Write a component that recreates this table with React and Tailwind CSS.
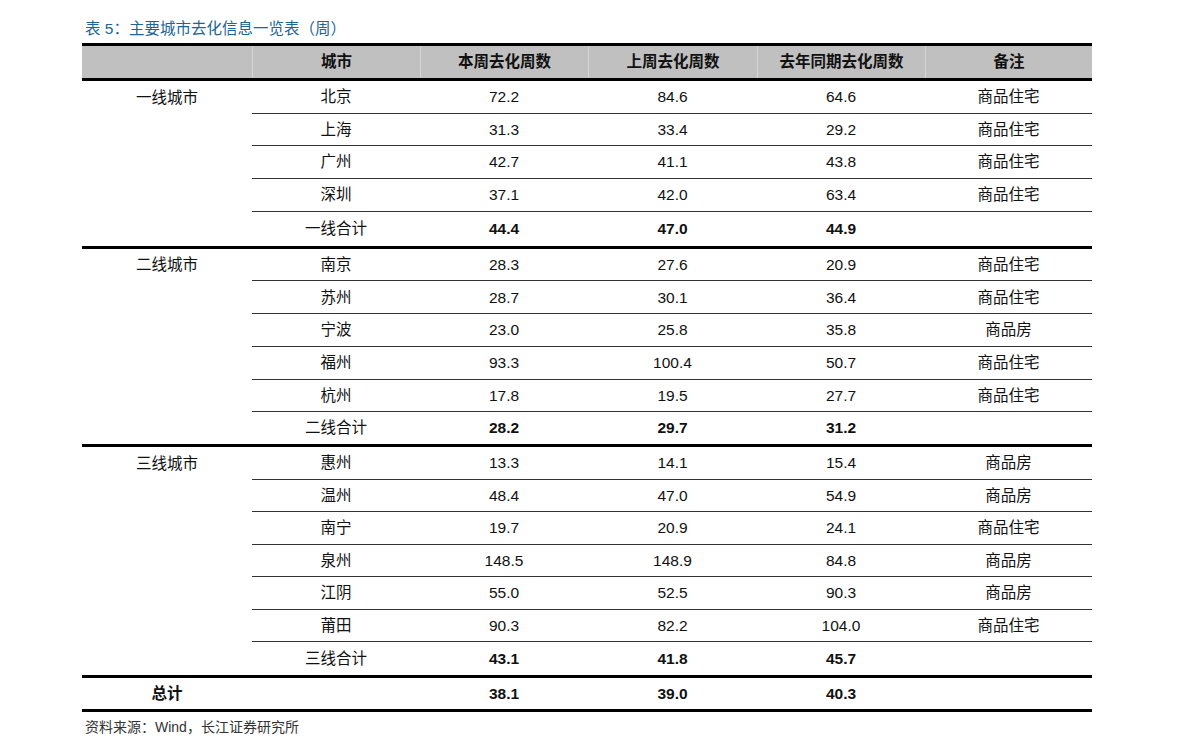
import React from "react";

const groups = [
  {
    label: "一线城市",
    rowH: "h-[32.7px]",
    totalH: "h-[34px]",
    rows: [
      ["北京", "72.2", "84.6", "64.6", "商品住宅"],
      ["上海", "31.3", "33.4", "29.2", "商品住宅"],
      ["广州", "42.7", "41.1", "43.8", "商品住宅"],
      ["深圳", "37.1", "42.0", "63.4", "商品住宅"],
    ],
    total: ["一线合计", "44.4", "47.0", "44.9", ""],
  },
  {
    label: "二线城市",
    rowH: "h-[32.74px]",
    totalH: "h-[31.6px]",
    rows: [
      ["南京", "28.3", "27.6", "20.9", "商品住宅"],
      ["苏州", "28.7", "30.1", "36.4", "商品住宅"],
      ["宁波", "23.0", "25.8", "35.8", "商品房"],
      ["福州", "93.3", "100.4", "50.7", "商品住宅"],
      ["杭州", "17.8", "19.5", "27.7", "商品住宅"],
    ],
    total: ["二线合计", "28.2", "29.7", "31.2", ""],
  },
  {
    label: "三线城市",
    rowH: "h-[32.57px]",
    totalH: "h-[32.57px]",
    rows: [
      ["惠州", "13.3", "14.1", "15.4", "商品房"],
      ["温州", "48.4", "47.0", "54.9", "商品房"],
      ["南宁", "19.7", "20.9", "24.1", "商品住宅"],
      ["泉州", "148.5", "148.9", "84.8", "商品房"],
      ["江阴", "55.0", "52.5", "90.3", "商品房"],
      ["莆田", "90.3", "82.2", "104.0", "商品住宅"],
    ],
    total: ["三线合计", "43.1", "41.8", "45.7", ""],
  },
];

const cols = "grid grid-cols-[168px_168px_169px_168px_167px]";

function Row({ cells, bold, last, h }) {
  return (
    <div className={`${cols} ${h} ${last ? "" : "border-b border-[#333]"}`}>
      {cells.map((c, i) => (
        <div
          key={i}
          className={`flex items-center justify-center ${
            bold && i > 0 && i < 4 ? "font-bold" : ""
          }`}
        >
          {c}
        </div>
      ))}
    </div>
  );
}

export default function App() {
  return (
    <div
      className="w-[1191px] h-[754px] bg-white text-[#111] text-[15.5px] leading-none"
      style={{ fontFamily: '"Liberation Sans", "Noto Sans CJK SC", sans-serif' }}
    >
      <div className="ml-[82px] w-[1010px] pt-[19px]">
        <div className="h-[20px] leading-[20px] pl-[3px] text-[#1e6496] text-[15.5px]">
          表 5：主要城市去化信息一览表（周）
        </div>
        <div className="mt-[4px] border-t-[3px] border-b-[3px] border-black">
          <div className="flex h-[32px] bg-[#c0c0c0] font-bold">
            <div className="w-[170px]" />
            {["城市", "本周去化周数", "上周去化周数", "去年同期去化周数", "备注"].map(
              (h, i) => (
                <div
                  key={i}
                  className={`flex items-center justify-center border-l border-[#d6d6d6] ${
                    ["w-[168px]", "w-[168px]", "w-[169px]", "w-[168px]", "w-[167px]"][i]
                  }`}
                >
                  {h}
                </div>
              )
            )}
          </div>
        </div>
        {groups.map((g, gi) => (
          <div key={gi} className="flex border-b-[3px] border-black">
            <div className={`w-[170px] ${g.rowH} flex items-center justify-center`}>
              {g.label}
            </div>
            <div className="flex flex-col">
              {g.rows.map((r, ri) => (
                <Row key={ri} cells={r} h={g.rowH} />
              ))}
              <Row cells={g.total} bold last h={g.totalH} />
            </div>
          </div>
        ))}
        <div className="flex h-[31.2px] border-b-[3px] border-black box-content">
          <div className="w-[170px] flex items-center justify-center font-bold">
            总计
          </div>
          <Row cells={["", "38.1", "39.0", "40.3", ""]} bold last h="h-[31.2px]" />
        </div>
        <div className="mt-[4.5px] h-[20px] leading-[20px] pl-[3px] text-[14px] text-[#333]">
          资料来源：Wind，长江证券研究所
        </div>
      </div>
    </div>
  );
}
